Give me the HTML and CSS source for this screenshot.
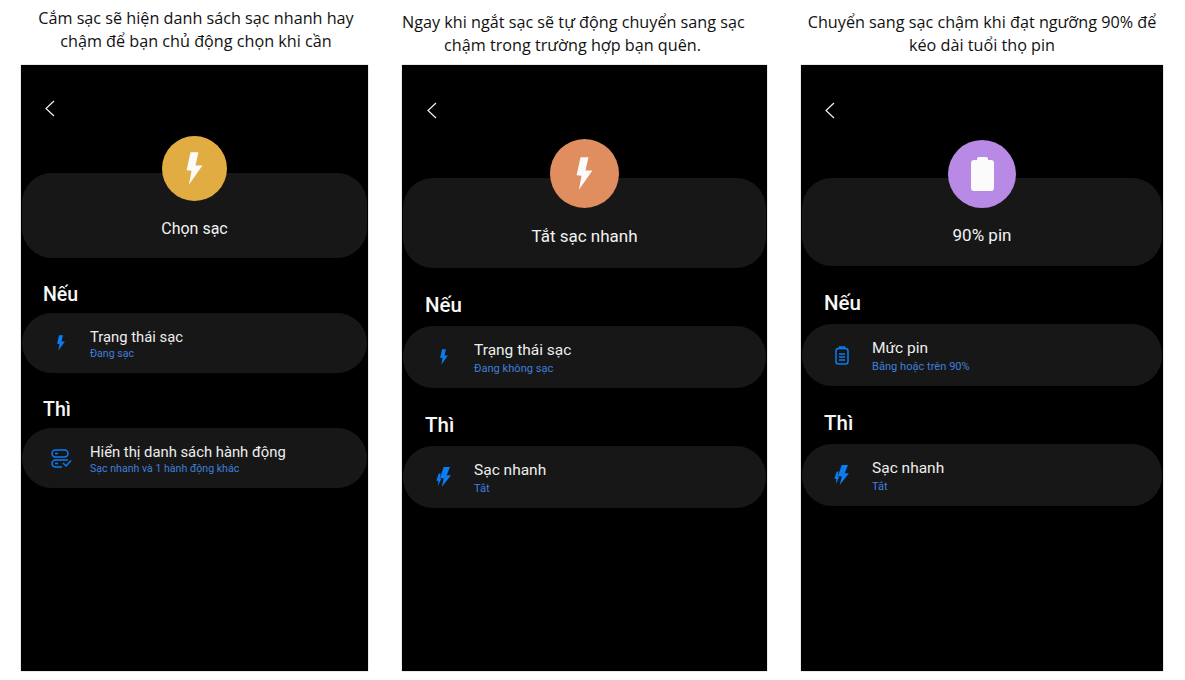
FILE: index.html
```html
<!DOCTYPE html>
<html>
<head>
  <meta charset="utf-8">
  <title>Chế độ sạc</title>
  <link rel="stylesheet" href="styles.css">
</head>
<body>
  <svg class="defs" width="0" height="0">
    <defs>
      <path id="bolt" d="M13 1 L37 1 L28 41 L49 41 L8 99 L16 57 L1 55 Z"/>
      <g id="bolt-fast">
        <path d="M7.7 0 L14 0 L10.7 8.2 L15 8.2 L5.7 20 L7.7 11.5 L4 11 Z"/>
        <path d="M2.8 6.5 L4.6 6.5 L3.8 11.5 L5.4 11.8 L1.8 19 L2.4 14 L0.4 13.6 Z"/>
      </g>
    </defs>
  </svg>

  <div class="page">
    <section class="col col-gold">
      <p class="caption">Cắm sạc sẽ hiện danh sách sạc nhanh hay<br>chậm để bạn chủ động chọn khi cần</p>
      <div class="phone">
        <div class="topbar">
          <svg class="back" viewBox="0 0 10 17"><path d="M9 1 L1 8.5 L9 16"/></svg>
        </div>
        <div class="hero">
          <div class="circle">
            <svg class="hero-bolt" viewBox="0 0 50 100"><use href="#bolt"/></svg>
          </div>
          <div class="hero-label">Chọn sạc</div>
        </div>
        <h2 class="head">Nếu</h2>
        <div class="row">
          <div class="row-icon">
            <svg class="ico-bolt" viewBox="0 0 50 100"><use href="#bolt"/></svg>
          </div>
          <div>
            <div class="row-title">Trạng thái sạc</div>
            <div class="row-sub">Đang sạc</div>
          </div>
        </div>
        <h2 class="head">Thì</h2>
        <div class="row">
          <div class="row-icon">
            <svg class="ico-list" viewBox="0 0 21 19">
              <rect x="1" y="1" width="16" height="7" rx="3.5"/>
              <path d="M17 11 H4.5 A3.5 3.5 0 0 0 4.5 18 H11"/>
              <path d="M4 4.5 H7"/>
              <path d="M4 14.5 H7"/>
              <path d="M12 14 L15 17 L20 11.5"/>
            </svg>
          </div>
          <div>
            <div class="row-title">Hiển thị danh sách hành động</div>
            <div class="row-sub">Sạc nhanh và 1 hành động khác</div>
          </div>
        </div>
      </div>
    </section>

    <section class="col col-orange">
      <p class="caption">Ngay khi ngắt sạc sẽ tự động chuyển sang sạc<br>chậm trong trường hợp bạn quên.</p>
      <div class="phone">
        <div class="topbar">
          <svg class="back" viewBox="0 0 10 17"><path d="M9 1 L1 8.5 L9 16"/></svg>
        </div>
        <div class="hero">
          <div class="circle">
            <svg class="hero-bolt" viewBox="0 0 50 100"><use href="#bolt"/></svg>
          </div>
          <div class="hero-label">Tắt sạc nhanh</div>
        </div>
        <h2 class="head">Nếu</h2>
        <div class="row">
          <div class="row-icon">
            <svg class="ico-bolt" viewBox="0 0 50 100"><use href="#bolt"/></svg>
          </div>
          <div>
            <div class="row-title">Trạng thái sạc</div>
            <div class="row-sub">Đang không sạc</div>
          </div>
        </div>
        <h2 class="head">Thì</h2>
        <div class="row">
          <div class="row-icon">
            <svg class="ico-fast" viewBox="0 0 16 20"><use href="#bolt-fast"/></svg>
          </div>
          <div>
            <div class="row-title">Sạc nhanh</div>
            <div class="row-sub">Tắt</div>
          </div>
        </div>
      </div>
    </section>

    <section class="col col-purple">
      <p class="caption">Chuyển sang sạc chậm khi đạt ngưỡng 90% để<br>kéo dài tuổi thọ pin</p>
      <div class="phone">
        <div class="topbar">
          <svg class="back" viewBox="0 0 10 17"><path d="M9 1 L1 8.5 L9 16"/></svg>
        </div>
        <div class="hero">
          <div class="circle">
            <svg class="hero-batt" viewBox="0 0 23 34">
              <path d="M6 3 V2 Q6 0 8 0 H15 Q17 0 17 2 V3 H20 Q23 3 23 6 V31 Q23 34 20 34 H3 Q0 34 0 31 V6 Q0 3 3 3 Z"/>
            </svg>
          </div>
          <div class="hero-label">90% pin</div>
        </div>
        <h2 class="head">Nếu</h2>
        <div class="row">
          <div class="row-icon">
            <svg class="ico-batt" viewBox="0 0 14 19">
              <rect x="1" y="2.5" width="12" height="15.5" rx="2.5"/>
              <path d="M4.5 2.5 V1 H9.5 V2.5"/>
              <path d="M4 8 H10 M4 11 H10 M4 14 H10"/>
            </svg>
          </div>
          <div>
            <div class="row-title">Mức pin</div>
            <div class="row-sub">Bằng hoặc trên 90%</div>
          </div>
        </div>
        <h2 class="head">Thì</h2>
        <div class="row">
          <div class="row-icon">
            <svg class="ico-fast" viewBox="0 0 16 20"><use href="#bolt-fast"/></svg>
          </div>
          <div>
            <div class="row-title">Sạc nhanh</div>
            <div class="row-sub">Tắt</div>
          </div>
        </div>
      </div>
    </section>
  </div>
</body>
</html>
```

FILE: styles.css
```css
html, body {
  margin: 0;
  height: 680px;
  overflow: hidden;
  background: #fff;
}
body {
  font-family: Roboto, "Liberation Sans", sans-serif;
}
.defs {
  display: block;
  height: 0;
}
.page {
  display: flex;
  padding-left: 21px;
}

/* the three shots are not the same scale, so each sets its own numbers */
.col {
  flex: none;
  width: var(--w);
}
.col-gold {
  --w: 347px;
  --circle: 65px;
  --circle-top: -37px;
  --top-h: 108px;
  --hero-h: 85px;
  --label-gap: 18px;
  --label-size: 16px;
  --head-h: 55px;
  --head-pad: 6px;
  --head-size: 19.5px;
  --head-left: 22px;
  --row-h: 60px;
  --icon-w: 68px;
  --title-size: 14.8px;
  --sub-size: 10.6px;
  --sub-gap: 0;
  --back-left: 24px;
  --back-top: 35px;
  --tint: #e1ac41;
  margin-right: 34px;
}
.col-orange {
  --w: 365px;
  --circle: 69px;
  --circle-top: -39px;
  --top-h: 113px;
  --hero-h: 90px;
  --label-gap: 18px;
  --label-size: 17px;
  --head-h: 58px;
  --head-pad: 9px;
  --head-size: 20.5px;
  --head-left: 23px;
  --row-h: 62px;
  --icon-w: 71px;
  --title-size: 15.5px;
  --sub-size: 11.1px;
  --sub-gap: 2px;
  --back-left: 25px;
  --back-top: 37px;
  --tint: #e08e5f;
  margin-right: 34px;
}
.col-purple {
  --w: 362px;
  --circle: 68px;
  --circle-top: -38px;
  --top-h: 113px;
  --hero-h: 88px;
  --label-gap: 17px;
  --label-size: 17px;
  --head-h: 58px;
  --head-pad: 9px;
  --head-size: 20.5px;
  --head-left: 23px;
  --row-h: 62px;
  --icon-w: 70px;
  --title-size: 15.5px;
  --sub-size: 11.1px;
  --sub-gap: 2px;
  --back-left: 24px;
  --back-top: 37px;
  --tint: #b88ae6;
}

.caption {
  box-sizing: border-box;
  height: 65px;
  margin: 0;
  padding-top: 7px;
  font-family: "Open Sans", "Noto Sans", sans-serif;
  font-size: 16.2px;
  line-height: 23px;
  color: #111;
  text-align: center;
  white-space: nowrap;
}
.col-gold .caption {
  padding-left: 3px;
}
.col-orange .caption {
  padding-top: 11px;
  padding-right: 24px;
}
.col-purple .caption {
  padding-top: 11px;
}

.phone {
  height: 606px;
  background: #000;
  box-shadow: 0 0 1px #777;
  color: #f2f2f2;
}
.topbar {
  box-sizing: border-box;
  height: var(--top-h);
  padding: var(--back-top) 0 0 var(--back-left);
}
.back {
  display: block;
  width: 10px;
  height: 17px;
  fill: none;
  stroke: #f2f2f2;
  stroke-width: 1.2;
}

.hero, .row {
  margin: 0 1px;
  background: #171717;
}
.hero {
  display: flex;
  flex-direction: column;
  align-items: center;
  height: var(--hero-h);
  border-radius: 30px;
}
.circle {
  display: flex;
  flex: none;
  align-items: center;
  justify-content: center;
  width: var(--circle);
  height: var(--circle);
  margin-top: var(--circle-top);
  border-radius: 50%;
  background: var(--tint);
}
.hero-bolt {
  width: 17px;
  height: 33px;
  fill: #fbfbfb;
}
.hero-batt {
  width: 23px;
  height: 34px;
  fill: #fbfbfb;
}
.hero-label {
  margin-top: var(--label-gap);
  font-size: var(--label-size);
  line-height: 20px;
}

.head {
  box-sizing: border-box;
  display: flex;
  align-items: flex-end;
  height: var(--head-h);
  margin: 0;
  padding: 0 0 var(--head-pad) var(--head-left);
  font-size: var(--head-size);
  font-weight: 500;
  line-height: 24px;
  color: #f7f7f7;
}

.row {
  box-sizing: border-box;
  display: flex;
  align-items: center;
  height: var(--row-h);
  padding-top: 2px;
  border-radius: 30px;
}
.row-icon {
  display: flex;
  flex: none;
  align-items: center;
  justify-content: center;
  box-sizing: border-box;
  width: var(--icon-w);
  margin-top: -2px;
  padding-left: 10px;
}
.row-title {
  font-size: var(--title-size);
  line-height: 19px;
  color: #eee;
}
.row-sub {
  margin-top: var(--sub-gap);
  font-size: var(--sub-size);
  line-height: 14px;
  color: #3f7fdb;
}

.ico-bolt {
  width: 10px;
  height: 16px;
  fill: #0a7df2;
}
.ico-fast {
  width: 16px;
  height: 20px;
  fill: #0a7df2;
}
.ico-list, .ico-batt {
  fill: none;
  stroke: #0a7df2;
  stroke-width: 1.5;
}
.ico-list {
  width: 21px;
  height: 19px;
}
.ico-batt {
  width: 14px;
  height: 19px;
}
```
